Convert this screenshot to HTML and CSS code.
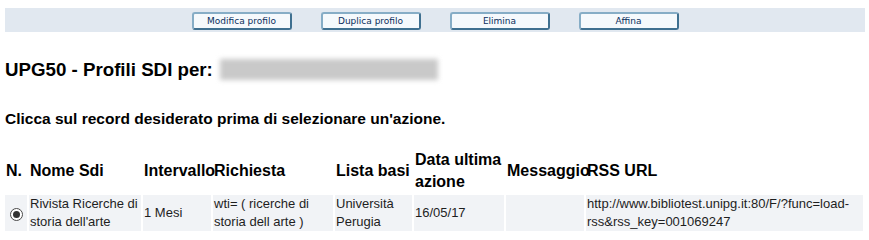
FILE: index.html
```html
<!DOCTYPE html>
<html lang="it">
<head>
<meta charset="utf-8">
<title>UPG50 - Profili SDI</title>
<link rel="stylesheet" href="styles.css">
</head>
<body>
<div class="toolbar">
  <button class="btn" type="button">Modifica profilo</button>
  <button class="btn" type="button">Duplica profilo</button>
  <button class="btn" type="button">Elimina</button>
  <button class="btn" type="button">Affina</button>
</div>
<h3 class="title">UPG50 - Profili SDI per: <span class="blur"></span></h3>
<p class="hint">Clicca sul record desiderato prima di selezionare un'azione.</p>
<table class="list">
  <colgroup>
    <col class="c1"><col class="c2"><col class="c3"><col class="c4"><col class="c5"><col class="c6"><col class="c7"><col class="c8">
  </colgroup>
  <thead>
    <tr>
      <th>N.</th>
      <th>Nome Sdi</th>
      <th>Intervallo</th>
      <th>Richiesta</th>
      <th>Lista basi</th>
      <th>Data ultima azione</th>
      <th>Messaggio</th>
      <th>RSS URL</th>
    </tr>
  </thead>
  <tbody>
    <tr>
      <td class="sel"><input class="radio" type="radio" name="rec" checked></td>
      <td>Rivista Ricerche di storia dell'arte</td>
      <td>1 Mesi</td>
      <td>wti= ( ricerche di storia dell arte )</td>
      <td>Università Perugia</td>
      <td>16/05/17</td>
      <td></td>
      <td>http://www.bibliotest.unipg.it:80/F/?func=load-rss&amp;rss_key=001069247</td>
    </tr>
  </tbody>
</table>
</body>
</html>
```
FILE: styles.css
```css
html, body {
  margin: 0;
  padding: 0;
  background: #ffffff;
}
body {
  padding: 8px 4px 0 5px;
  font-family: "Liberation Sans", Arial, sans-serif;
  color: #000;
}
.toolbar {
  background: #e1e8f0;
  height: 24px;
  display: flex;
  justify-content: center;
  align-items: flex-start;
  gap: 29px;
  padding-top: 4px;
  box-sizing: border-box;
}
.btn {
  width: 100px;
  height: 18px;
  margin: 0;
  padding: 0;
  background: #f5f9fc;
  border: 2px solid;
  border-color: #86adc6 #3f7090 #3f7090 #86adc6;
  border-radius: 3px;
  font-family: "DejaVu Sans", Verdana, sans-serif;
  font-size: 9px;
  color: #0a2f5c;
  line-height: 14px;
}
.title {
  margin: 26px 0 0 0;
  font-size: 18.72px;
  line-height: 23px;
  font-weight: bold;
  display: flex;
  align-items: center;
}
.blur {
  display: inline-block;
  width: 218px;
  height: 21px;
  margin-left: 7px;
  background: #c9c9c9;
  filter: blur(2.5px);
}
.hint {
  margin: 28px 0 0 0;
  font-size: 15.5px;
  line-height: 19px;
  font-weight: bold;
}
.list {
  margin-top: 19px;
  border-collapse: separate;
  border-spacing: 2px;
  margin-left: -2px;
  table-layout: fixed;
  width: 862px;
}
.c1 { width: 22px; }
.c2 { width: 112px; }
.c3 { width: 68px; }
.c4 { width: 120px; }
.c5 { width: 77px; }
.c6 { width: 90px; }
.c7 { width: 78px; }
.c8 { width: auto; }
.list th {
  text-align: left;
  font-size: 16px;
  line-height: 22px;
  font-weight: bold;
  padding: 0 1px;
  vertical-align: middle;
}
.list td {
  background: #f1f3f6;
  font-size: 13px;
  line-height: 18px;
  color: #1e1e1e;
  padding: 0 1px;
  vertical-align: middle;
  height: 36px;
}
.list td.sel {
  text-align: center;
  padding: 0;
}
.radio {
  appearance: none;
  -webkit-appearance: none;
  box-sizing: border-box;
  width: 13px;
  height: 13px;
  margin: 4px 0 0 0;
  border: 1px solid #4a4a4a;
  border-radius: 50%;
  background: #ffffff;
  display: inline-grid;
  place-content: center;
}
.radio:checked::before {
  content: "";
  width: 7px;
  height: 7px;
  border-radius: 50%;
  background: #333333;
}
```
